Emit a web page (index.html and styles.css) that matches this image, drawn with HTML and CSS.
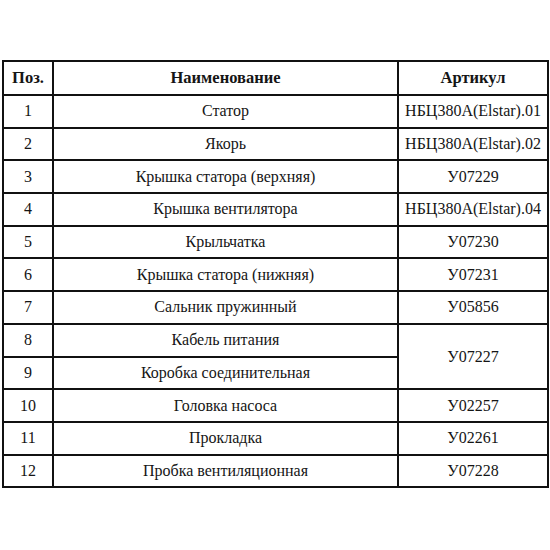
FILE: index.html
```html
<!DOCTYPE html>
<html>
<head>
<meta charset="utf-8">
<link rel="stylesheet" href="styles.css">
</head>
<body>
<table class="parts">
  <colgroup>
    <col class="pos">
    <col class="name">
    <col class="art">
  </colgroup>
  <thead>
    <tr class="head">
      <th>Поз.</th>
      <th>Наименование</th>
      <th>Артикул</th>
    </tr>
  </thead>
  <tbody>
    <tr><td>1</td><td>Статор</td><td>НБЦ380А(Elstar).01</td></tr>
    <tr><td>2</td><td>Якорь</td><td>НБЦ380А(Elstar).02</td></tr>
    <tr><td>3</td><td>Крышка статора (верхняя)</td><td>У07229</td></tr>
    <tr><td>4</td><td>Крышка вентилятора</td><td>НБЦ380А(Elstar).04</td></tr>
    <tr><td>5</td><td>Крыльчатка</td><td>У07230</td></tr>
    <tr><td>6</td><td>Крышка статора (нижняя)</td><td>У07231</td></tr>
    <tr><td>7</td><td>Сальник пружинный</td><td>У05856</td></tr>
    <tr><td>8</td><td>Кабель питания</td><td rowspan="2">У07227</td></tr>
    <tr><td>9</td><td>Коробка соединительная</td></tr>
    <tr><td>10</td><td>Головка насоса</td><td>У02257</td></tr>
    <tr><td>11</td><td>Прокладка</td><td>У02261</td></tr>
    <tr><td>12</td><td>Пробка вентиляционная</td><td>У07228</td></tr>
  </tbody>
</table>
</body>
</html>
```

FILE: styles.css
```css
html, body {
  margin: 0;
  padding: 0;
  background: #ffffff;
}
body {
  padding-top: 60px;
  padding-left: 2px;
  font-family: "Liberation Serif", "Times New Roman", serif;
  color: #151515;
}
.parts {
  border-collapse: collapse;
  width: 545px;
  table-layout: fixed;
  font-family: "Liberation Serif", "Times New Roman", serif;
  font-size: 16px;
}
.parts th, .parts td {
  border: 2px solid #111111;
  text-align: center;
  vertical-align: middle;
  padding: 0;
  height: 30.7px;
  white-space: nowrap;
}
.parts .head th {
  height: 32px;
  font-weight: bold;
  font-size: 16.5px;
}
col.pos { width: 50px; }
col.name { width: 345px; }
col.art { width: 150px; }
```
